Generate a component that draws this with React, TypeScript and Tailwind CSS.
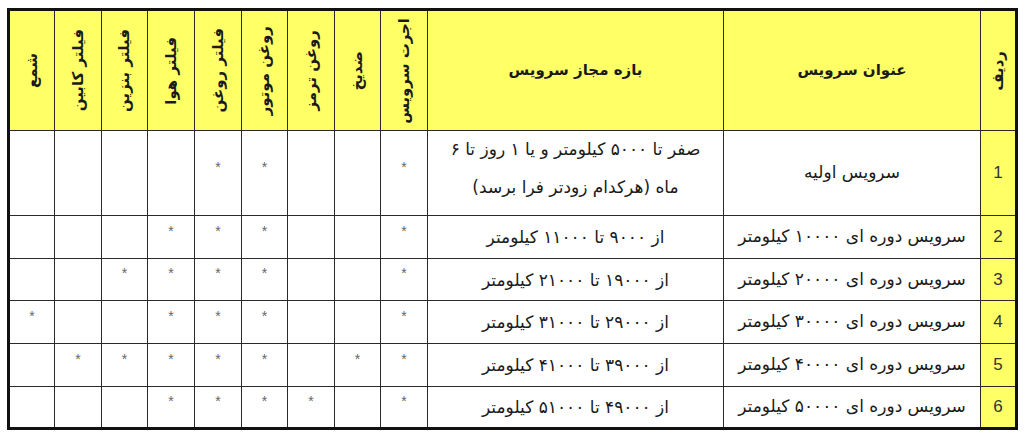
import React from 'react';

const vertHeads = ['اجرت سرویس', 'ضدیخ', 'روغن ترمز', 'روغن موتور', 'فیلتر روغن', 'فیلتر هوا', 'فیلتر بنزین', 'فیلتر کابین', 'شمع'];

// marks per row, in the same order as vertHeads
const rows = [
  { n: '1', title: 'سرویس اولیه', range: ['صفر تا ۵۰۰۰ کیلومتر و یا ۱ روز تا ۶', 'ماه (هرکدام زودتر فرا برسد)'], marks: [1, 0, 0, 1, 1, 0, 0, 0, 0] },
  { n: '2', title: 'سرویس دوره ای ۱۰۰۰۰ کیلومتر', range: ['از ۹۰۰۰ تا ۱۱۰۰۰ کیلومتر'], marks: [1, 0, 0, 1, 1, 1, 0, 0, 0] },
  { n: '3', title: 'سرویس دوره ای ۲۰۰۰۰ کیلومتر', range: ['از ۱۹۰۰۰ تا ۲۱۰۰۰ کیلومتر'], marks: [1, 0, 0, 1, 1, 1, 1, 0, 0] },
  { n: '4', title: 'سرویس دوره ای ۳۰۰۰۰ کیلومتر', range: ['از ۲۹۰۰۰ تا ۳۱۰۰۰ کیلومتر'], marks: [1, 0, 0, 1, 1, 1, 0, 0, 1] },
  { n: '5', title: 'سرویس دوره ای ۴۰۰۰۰ کیلومتر', range: ['از ۳۹۰۰۰ تا ۴۱۰۰۰ کیلومتر'], marks: [1, 1, 0, 1, 1, 1, 1, 1, 0] },
  { n: '6', title: 'سرویس دوره ای ۵۰۰۰۰ کیلومتر', range: ['از ۴۹۰۰۰ تا ۵۱۰۰۰ کیلومتر'], marks: [1, 0, 1, 1, 1, 1, 0, 0, 0] },
];

const font = "font-['DejaVu_Sans',sans-serif]";

export default function App() {
  return (
    <div className="w-[1024px] h-[438px] bg-white pl-[7px] pt-[8px]">
      <div dir="rtl" className={`w-[1011px] border-[3px] border-[#111] bg-[#2a2a2a] ${font} text-[#1a1a1a]`}>
        <div className="grid gap-px grid-cols-[34px_256px_295px_46px_45px_46px_45px_46px_46px_45px_46px_44px] grid-rows-[119px_84px_42px_41px_42px_42px_40px]">
          <div className="bg-[#ffff66] flex items-center justify-center">
            <span className="[writing-mode:vertical-rl] rotate-180 text-[15px] font-bold">ردیف</span>
          </div>
          <div className="bg-[#ffff66] flex items-center justify-center text-[15px] font-bold">عنوان سرویس</div>
          <div className="bg-[#ffff66] flex items-center justify-center text-[15px] font-bold">بازه مجاز سرویس</div>
          {vertHeads.map((h) => (
            <div key={h} className="bg-[#ffff66] flex items-center justify-center">
              <span className="[writing-mode:vertical-rl] rotate-180 text-[15px] font-bold whitespace-nowrap">{h}</span>
            </div>
          ))}
          {rows.map((r) => (
            <React.Fragment key={r.n}>
              <div className="bg-[#ffff66] flex items-center justify-center font-['Liberation_Sans',sans-serif] text-[17px] text-[#333]">{r.n}</div>
              <div className="bg-white flex items-center justify-center text-[17px] whitespace-nowrap">{r.title}</div>
              <div className={`bg-white flex flex-col items-center justify-center text-[17px] leading-[38px] whitespace-nowrap ${r.range.length > 1 ? 'pb-[10px]' : ''}`}>
                {r.range.map((l) => (
                  <span key={l}>{l}</span>
                ))}
              </div>
              {r.marks.map((m, i) => (
                <div key={i} className="bg-white flex items-center justify-center pb-3 text-[14px] text-[#666] font-['Liberation_Sans',sans-serif]">
                  {m ? '*' : ''}
                </div>
              ))}
            </React.Fragment>
          ))}
        </div>
      </div>
    </div>
  );
}
